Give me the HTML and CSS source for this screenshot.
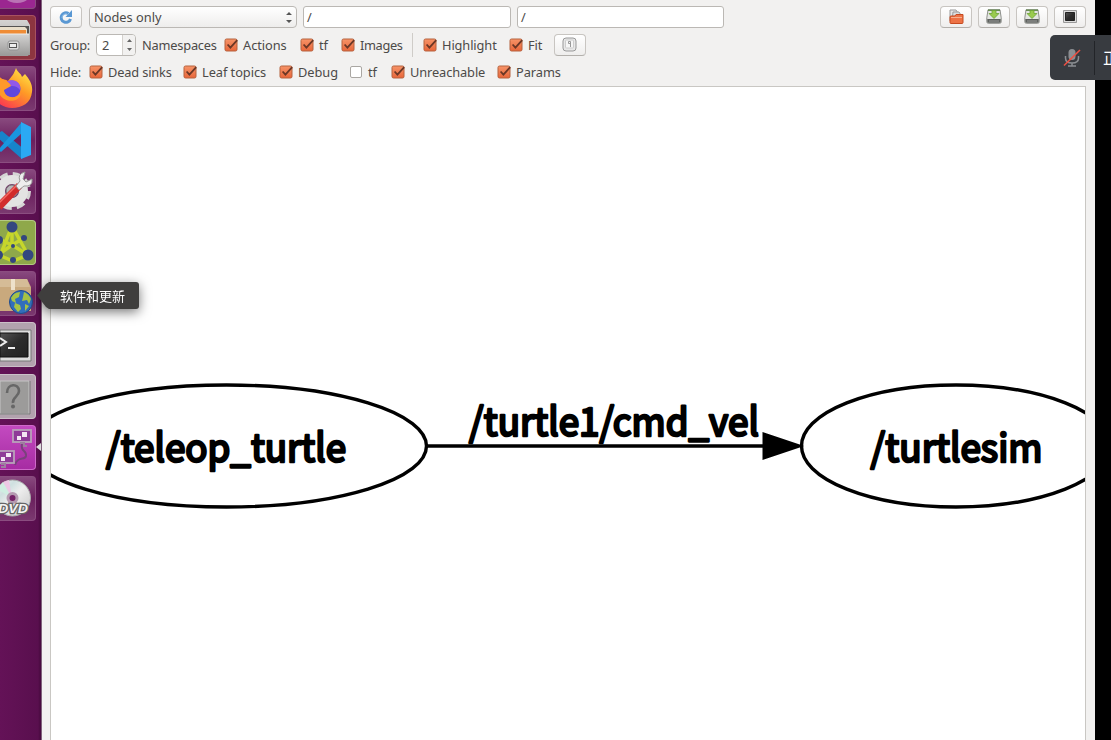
FILE: index.html
```html
<!DOCTYPE html>
<html lang="en">
<head>
<meta charset="utf-8">
<title>Node Graph</title>
<link rel="stylesheet" href="styles.css">
</head>
<body>
<svg class="defs" width="0" height="0" aria-hidden="true">
  <defs>
    <linearGradient id="orange" x2="0" y2="1"><stop stop-color="#f79468"/><stop offset="1" stop-color="#e8663a"/></linearGradient>
    <linearGradient id="metal" x2="0" y2="1"><stop stop-color="#d4d3d2"/><stop offset="1" stop-color="#9b9a99"/></linearGradient>
    <linearGradient id="fire" x1="0.9" y1="0" x2="0.2" y2="1"><stop stop-color="#fff14a"/><stop offset=".45" stop-color="#ff9a26"/><stop offset="1" stop-color="#fb2d55"/></linearGradient>
    <linearGradient id="dark" x2="1" y2="1"><stop stop-color="#555"/><stop offset=".5" stop-color="#2c2c2c"/><stop offset="1" stop-color="#222"/></linearGradient>
    <linearGradient id="disc" x2="1" y2="1"><stop stop-color="#f4f4f4"/><stop offset=".3" stop-color="#cfe0e0"/><stop offset=".5" stop-color="#eee"/><stop offset="1" stop-color="#c4c4c4"/></linearGradient>
    <symbol id="check" viewBox="0 0 16 14">
      <rect x="1" y="1" width="12" height="12" rx="1.500" fill="url(#orange)" stroke="#b5623f"/>
      <path d="M3.600 6.500 6.400 9.600 13.200 2.200" fill="none" stroke="#6b3726" stroke-width="1.800"/>
    </symbol>
    <symbol id="save" viewBox="0 0 16 15">
      <path d="M2 .8h12l1.200 8v4q0 1.500-1.500 1.500H2.300Q.8 14.300.8 12.800v-4z" fill="#e4e6e2" stroke="#8c8e8a"/>
      <path d="M1.300 10h13.400v2.800q0 1-1 1H2.300q-1 0-1-1z" fill="#5f625f"/><path d="M3 12h10" stroke="#999"/>
      <path d="M2 1.200h12" stroke="#5f8748" stroke-width="1.400"/>
      <path d="M6 1.500h4v3h3L8 9.500l-5-5h3z" fill="#9acb4f" stroke="#6da336" stroke-width=".8"/>
    </symbol>
  </defs>
</svg>
<div class="desktop">
  <nav class="launcher">
    <div class="tile top"><svg width="36" height="45"><circle cx="17" cy="20" r="18" fill="#ba73b5"/><circle cx="17" cy="20" r="13" fill="#c885c2"/></svg></div>
    <div class="tile files"><svg width="36" height="45"><path d="M0 5h27l3 5v27l-2 4H0z" fill="url(#metal)"/><path d="M0 11h29v9H0z" fill="#545352"/><path d="M0 12h25l2 2v5H0z" fill="#e9dec9"/><path d="M0 15h26v4H0z" fill="#ef8c36"/><path d="M0 19h29l1 21H0z" fill="url(#metal)"/><path d="M0 19h29" stroke="#ededed"/><rect x="8" y="26" width="11" height="9" rx="2" fill="#d9d9d9" stroke="#929292"/><rect x="9.500" y="28.500" width="7" height="4" fill="#eee" stroke="#555"/></svg></div>
    <div class="tile glass"><svg width="36" height="45"><path d="M-9 24C-7 10 2 12 8 15 12 10 14 8 16 2c2 5 5 5 6 9l3-3c5 6 8 11 7 18C31 37 22 42 12 42S-7 35-9 24z" fill="url(#fire)"/><circle cx="12" cy="23" r="8.500" fill="#6147dc"/><path d="M6 16c8-5 16 1 14 8-3-4-7-5-14-3z" fill="#9159e9"/><path d="M-2 9C2 15 9 14 11 20L4 24C5 33 17 33 21 27 20 37 5 37 0 29z" fill="#ff9929"/></svg></div>
    <div class="tile glass"><svg width="36" height="45"><path d="M-2 15 2 13 25 32 22 41 -2 20z" fill="#1684ca"/><path d="M-2 32 22 4v11L1 34z" fill="#1996df"/><path d="M21 4 31 9v28l-10 4z" fill="#2ba9f3"/></svg></div>
    <div class="tile glass"><svg width="36" height="45"><circle cx="12" cy="22" r="16.500" fill="none" stroke="#d5d5d5" stroke-width="5" stroke-dasharray="8 5"/><circle cx="12" cy="22" r="11.500" fill="none" stroke="#e3e3e3" stroke-width="9"/><circle cx="12" cy="22" r="6" fill="#b8b5b8" stroke="#777"/><path d="M-2 33 17 14l5 5L1 41z" fill="#d22c2c"/><path d="M-1 34 17 16" stroke="#f36c65" stroke-width="1.500"/><path d="M16 17 20 12Q17 5 25 3l-2 7 3 3 6-3Q33 18 24 17l-5 4z" fill="#eee" stroke="#999"/></svg></div>
    <div class="tile rqt"><svg width="36" height="45"><path d="M12 6 0 36M12 6 28 35M12 25-2 35M12 25 28 35M12 25V7M1 36 13 41 28 35M1 20 12 25 24 18" fill="none" stroke="#c6d62b" stroke-width="3.500"/><g fill="#34477f"><circle cx="12" cy="7" r="5.500"/><circle cx="-1" cy="20" r="4"/><circle cx="24" cy="18" r="3"/><circle cx="13" cy="26" r="2"/><circle cx="-2" cy="35" r="5"/><circle cx="28" cy="35" r="5.500"/><circle cx="13" cy="40" r="3"/></g></svg></div>
    <div class="tile glass"><svg width="36" height="45"><path d="M0 8h27l4 8v24H0z" fill="#c9a97d"/><path d="M0 8h27l3 8H0z" fill="#d5bc97"/><path d="M11 8h4v11h-4z" fill="#eee1ca"/><circle cx="21" cy="31" r="11.500" fill="#326ebb" stroke="#204c8a"/><path d="M11 27q3-6 9-6l-1 5-4 2 1 4-4-2zM24 21q5 2 7 7l-2 5-2-4-5 1 1-4zM15 32l5 2 1 4-3 3-4-5zM25 33l4 2-4 5z" fill="#a7c344"/></svg></div>
    <div class="tile pale"><svg width="36" height="45"><path d="M0 8h31v31H0z" fill="#ddd" stroke="#777"/><path d="M0 11h28v24H0z" fill="url(#dark)" stroke="#111"/><path d="m0 16 6 4-6 4M8 26h7" fill="none" stroke="#eee" stroke-width="2"/></svg></div>
    <div class="tile pale"><svg width="36" height="45"><path d="M0 7h29v33H0z" fill="#9c9b9a" stroke="#c5c5c5"/><path d="M0 40h30V7" fill="none" stroke="#777"/><path d="M7 19C7 9 19 9 19 17c0 6-7 6-6 12" fill="none" stroke="#676767" stroke-width="2.600"/><circle cx="13" cy="32.500" r="2" fill="#676767"/></svg></div>
    <div class="tile pink"><svg width="36" height="45"><path d="M22 19c-2 8 5 6 4 12-1 5-8-1-11 9" fill="none" stroke="#79427c" stroke-width="2"/><g fill="#8f3b98" stroke="#b9a2ba" stroke-width="1.800"><rect x="13" y="5" width="18" height="12"/><rect x="-3" y="26" width="17" height="12"/></g><path d="M22 7h5v5h-5zM17 11h4v4h-4zM6 28h5v4H6zM1 32h4v4H1z" fill="#f3e6f3"/><path d="M20 18h4v3h3M1 39h4v3H1" fill="none" stroke="#9d7e9f" stroke-width="2"/></svg></div>
    <div class="tile glass"><svg width="36" height="45"><circle cx="12.500" cy="22" r="18" fill="url(#disc)" stroke="#aaa"/><path d="M12 22-3 13 3 6z" fill="#cfeee2"/><path d="M12 22 3 6 9 4z" fill="#edc8e5"/><circle cx="12.500" cy="22" r="6" fill="#b59ab1"/><circle cx="12.500" cy="22" r="3" fill="#752267"/><text class="dvd" x="-2" y="37" textLength="30" lengthAdjust="spacingAndGlyphs">DVD</text></svg></div>
    <svg class="running" width="5" height="8"><path d="M5 0v8L0 4z" fill="#ddd"/></svg>
  </nav>

  <main class="window">
    <div class="row bar">
      <button class="btn"><svg width="16" height="16" viewBox="0 0 16 16"><path d="M10.500 4.500A4.800 4.800 0 1 0 12.500 10" fill="none" stroke="#5a98d3" stroke-width="3"/><path d="M14 1v7H7.500z" fill="#5a98d3"/><path d="M9 5A4 4 0 0 0 4 9" fill="none" stroke="#91bee8"/></svg></button>
      <div class="select"><span>Nodes only</span><svg width="6" height="12"><path d="M0 4 3 1 6 4zM0 9h6l-3 3z" fill="#555"/></svg></div>
      <div class="field">/</div>
      <div class="field second">/</div>
      <div class="tools">
        <button class="btn"><svg width="16" height="16" viewBox="0 0 16 16"><path d="M2 12V1h6l2 3v8z" fill="#e5e5e5" stroke="#999"/><path d="M5 3h6l2 3v7H4z" fill="#ddd" stroke="#999"/><path d="M2 13.500V8q0-1 1-1h4l1-1.500h7v8q0 1-1 1H3q-1 0-1-1z" fill="#ed7245" stroke="#c54a20"/><path d="M3 8.500h11" stroke="#f7b08f"/></svg></button>
        <button class="btn"><svg width="16" height="15"><use href="#save"/></svg></button>
        <button class="btn"><svg width="16" height="15"><use href="#save"/></svg></button>
        <button class="btn"><svg width="14" height="13"><path d="M.5.5h13v12H.5z" fill="#ddd" stroke="#999"/><path d="M2.500 2.500h9v8h-9z" fill="url(#dark)" stroke="#222"/></svg></button>
      </div>
    </div>
    <div class="row options">
      <span class="lead group">Group:</span>
      <div class="spin"><span>2</span><i><svg width="5" height="14"><path d="M0 4 2.500 1 5 4zM0 10h5l-2.500 3z" fill="#666"/></svg></i></div>
      <span class="lead names">Namespaces</span>
      <label class="w76"><svg class="box"><use href="#check"/></svg><span>Actions</span></label>
      <label class="w41"><svg class="box"><use href="#check"/></svg><span>tf</span></label>
      <label class="w71"><svg class="box"><use href="#check"/></svg><span>Images</span></label>
      <i class="rule"></i>
      <label class="w86"><svg class="box"><use href="#check"/></svg><span>Highlight</span></label>
      <label class="w45"><svg class="box"><use href="#check"/></svg><span>Fit</span></label>
      <button class="btn"><svg width="16" height="16"><rect x="1" y="1" width="13" height="13" rx="3" fill="#e7e7e7" stroke="#999"/><rect x="3.500" y="3" width="8" height="8" rx="1" fill="#f6f6f6" stroke="#ccc"/><path d="M8.500 10V4.500H6.500V6.500h2" fill="none" stroke="#999"/></svg></button>
    </div>
    <div class="row hide">
      <span class="lead hidden-label">Hide:</span>
      <label class="w94"><svg class="box"><use href="#check"/></svg><span>Dead sinks</span></label>
      <label class="w96"><svg class="box"><use href="#check"/></svg><span>Leaf topics</span></label>
      <label class="w70"><svg class="box"><use href="#check"/></svg><span>Debug</span></label>
      <label class="w42"><svg class="box"><rect x="1.500" y="1.500" width="11" height="11" rx="1.500" fill="#fff" stroke="#aaa7a3"/></svg><span>tf</span></label>
      <label class="w106"><svg class="box"><use href="#check"/></svg><span>Unreachable</span></label>
      <label class="w70"><svg class="box"><use href="#check"/></svg><span>Params</span></label>
    </div>
    <div class="canvas">
      <svg width="1034" height="660" viewBox="51 87 1034 660">
        <g fill="none" stroke="#000" stroke-width="3.400">
          <ellipse cx="226.500" cy="446" rx="200" ry="61"/>
          <ellipse cx="956" cy="446" rx="154.500" ry="61"/>
          <path d="M427 446H765"/>
        </g>
        <path d="M763.500 433.500V458.500L801 446z" stroke="#000" stroke-width="2"/>
        <g class="names-text">
          <text x="106" y="462" textLength="240" lengthAdjust="spacingAndGlyphs">/teleop_turtle</text>
          <text x="469" y="436" textLength="290" lengthAdjust="spacingAndGlyphs">/turtle1/cmd_vel</text>
          <text x="870.500" y="462" textLength="172" lengthAdjust="spacingAndGlyphs">/turtlesim</text>
        </g>
      </svg>
    </div>
  </main>
  <div class="tip"><svg width="12" height="27"><path d="M12 0 9 2 0 13.500l9 11.500 3 2z" fill="#3f3e3d"/></svg><span>软件和更新</span></div>
  <div class="meeting">
    <svg width="18" height="20" viewBox="0 0 18 20"><rect x="5.500" y="1" width="7" height="11" rx="3.500" fill="#8b8e92"/><path d="M2.500 8v2q0 5 6.500 5t6.500-5V8M9 15v3M5 18h8" fill="none" stroke="#8b8e92" stroke-width="1.500"/><path d="M1 17.500 17 2" stroke="#ed5042" stroke-width="1.600"/></svg>
    <span>正</span>
  </div>
</div>
</body>
</html>
```

FILE: styles.css
```css
* { box-sizing: border-box; }
body { margin: 0; overflow: hidden; background: #000; }
.defs { position: absolute; }
.desktop { position: relative; display: flex; width: 1111px; height: 740px; overflow: hidden; font: 12.8px/18px "Noto Sans", sans-serif; color: #4c4a48; }
.launcher { position: relative; flex: none; display: flex; flex-direction: column; gap: 6.2px; width: 42px; height: 740px; background: linear-gradient(90deg, #641257, #590f4e 38px, #45093c 41px, #bbb 42px); }
.tile { flex: none; width: 35.5px; height: 45px; border: 1px solid #8b4d80; border-left: 0; border-radius: 0 4px 4px 0; overflow: hidden; }
.tile svg { display: block; margin-top: -1px; }
.top { margin-top: -36px; background: #9b2690; }
.top svg { margin-top: 0; }
.files { background: #8d3540; border-color: #a85260; }
.glass { background: linear-gradient(#88497e, #6b205e 50%, #7b3970); }
.rqt { background: #8fa84a; border-color: #b4c982; }
.pale { background: #b2a2ae; border-color: #cbbfc8; }
.pink { background: linear-gradient(#c34ac0, #a72ca3); border-color: #cf69ca; }
.running { position: absolute; left: 36px; top: 443px; }
.dvd { font: italic bold 13px "Liberation Sans", sans-serif; fill: #f4f4f4; stroke: #666; stroke-width: 2.5px; paint-order: stroke; }
.window { flex: none; display: flex; flex-direction: column; width: 1053px; height: 740px; padding-left: 8px; background: #f2f1f0; }
.row { display: flex; flex: none; align-items: center; }
.bar { height: 32px; padding-top: 1px; }
.btn { flex: none; display: flex; align-items: center; justify-content: center; width: 32px; height: 22px; padding: 0; border: 1px solid #c8c5c1; border-bottom-color: #b3b0ac; border-radius: 4px; background: linear-gradient(#fff, #efeeed); }
.select { display: flex; align-items: center; justify-content: space-between; width: 208px; height: 22px; margin-left: 7px; padding: 0 4px; border: 1px solid #bbb8b4; border-radius: 4px; background: linear-gradient(#fff, #eeedec); }
.field { width: 208px; height: 22px; margin-left: 6px; padding: 1px 3px; border: 1px solid #bbb8b4; border-radius: 3px; background: #fff; }
.second { width: 207px; }
.tools { display: flex; gap: 6px; margin-left: 216px; }
.options { height: 26px; }
.lead { flex: none; white-space: nowrap; }
.group { width: 46px; letter-spacing: -.2px; }
.spin { display: flex; width: 40px; height: 22px; margin-right: 6px; border: 1px solid #bbb8b4; border-radius: 4px; background: #fff; overflow: hidden; }
.spin span { width: 25px; padding: 1px 0 0 5px; }
.spin i { flex: 1; display: flex; align-items: center; justify-content: center; border-left: 1px solid #d4d1cd; background: #f2f1f0; }
.names { width: 82px; letter-spacing: -.2px; }
label { flex: none; display: flex; align-items: center; gap: 3px; white-space: nowrap; letter-spacing: -.05px; }
.box { flex: none; width: 16px; height: 14px; }
.w41 { width: 41px; } .w42 { width: 42px; } .w45 { width: 45px; }
.w70 { width: 70px; } .w71 { width: 71px; letter-spacing: -.35px; } .w76 { width: 76px; }
.w86 { width: 86px; letter-spacing: -.1px; } .w94 { width: 94px; letter-spacing: -.15px; } .w96 { width: 96px; } .w106 { width: 106px; letter-spacing: -.1px; }
.rule { width: 1px; height: 24px; margin-right: 10px; background: #cfccc8; }
.hide { height: 28px; }
.hidden-label { width: 39px; }
.canvas { width: 1036px; height: 660px; border: 1px solid #c9c7c3; border-bottom: 0; background: #fff; overflow: hidden; flex: none; }
.canvas svg { display: block; }
.names-text { font: 39px "Noto Sans CJK SC", sans-serif; stroke: #000; stroke-width: 2.6px; stroke-linejoin: round; }
.tip { position: absolute; left: 37px; top: 282px; display: flex; filter: drop-shadow(0 3px 6px #0008); }
.tip span { width: 90px; height: 27px; padding-left: 11px; border-radius: 0 3px 3px 0; background: #3f3e3d; color: #fff; font: 13px/28px "Noto Sans CJK SC", sans-serif; }
.meeting { position: absolute; left: 1050px; top: 35px; display: flex; align-items: center; width: 70px; height: 45px; padding-left: 13px; border-radius: 5px 0 0 5px; background: #383b40; }
.meeting span { flex: none; height: 34px; margin-left: 13px; padding-left: 8px; border-left: 1px solid #222428; color: #fff; font: 16px/32px "Noto Sans CJK SC", sans-serif; }
```
